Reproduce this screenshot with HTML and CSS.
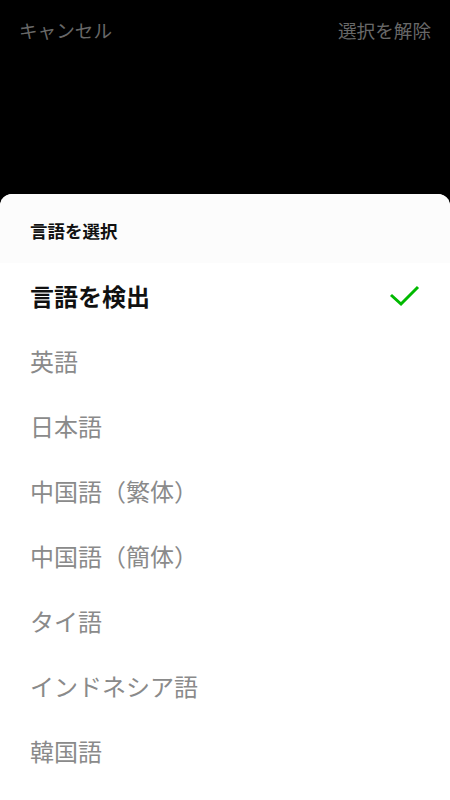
FILE: index.html
```html
<!DOCTYPE html>
<html lang="ja">
<head>
    <meta charset="UTF-8">
    <meta name="viewport" content="width=device-width, initial-scale=1.0">
    <title>言語を選択</title>
    <link rel="stylesheet" href="styles.css">
</head>
<body>
    <div class="topbar">
        <span class="top-action">キャンセル</span>
        <span class="top-action">選択を解除</span>
    </div>
    <div class="sheet">
        <div class="sheet-title">言語を選択</div>
        <ul class="lang-list">
            <li class="lang selected">
                <span>言語を検出</span>
                <svg class="check" width="32" height="24" viewBox="0 0 32 24">
                    <path d="M3 11 L13 20 L30 3" fill="none" stroke="#00b900" stroke-width="3"/>
                </svg>
            </li>
            <li class="lang">英語</li>
            <li class="lang">日本語</li>
            <li class="lang">中国語（繁体）</li>
            <li class="lang">中国語（簡体）</li>
            <li class="lang">タイ語</li>
            <li class="lang">インドネシア語</li>
            <li class="lang">韓国語</li>
        </ul>
    </div>
</body>
</html>
```
FILE: styles.css
```css
body {
    margin: 0;
    height: 800px;
    overflow: hidden;
    background-color: #000;
    font-family: "Noto Sans CJK JP", "Noto Sans", sans-serif;
}
.topbar {
    height: 58px;
    display: flex;
    justify-content: space-between;
    align-items: center;
    padding: 0 19px;
}
.top-action {
    color: #686868;
    font-size: 18.6px;
}
.sheet {
    margin-top: 136px;
    background-color: #fff;
    border-radius: 12px 12px 0 0;
    height: 606px;
}
.sheet-title {
    padding: 27px 30px 22px;
    line-height: 20px;
    font-size: 17.5px;
    font-weight: bold;
    color: #111;
    background-color: #fcfcfc;
    border-radius: 12px 12px 0 0;
}
.lang-list {
    list-style: none;
    margin: 0;
    padding: 0;
    background-color: #fff;
}
.lang {
    height: 65px;
    display: flex;
    align-items: center;
    justify-content: space-between;
    padding: 0 30px;
    font-size: 24px;
    color: #8a8a8a;
}
.selected {
    font-weight: bold;
    color: #111;
}
```
